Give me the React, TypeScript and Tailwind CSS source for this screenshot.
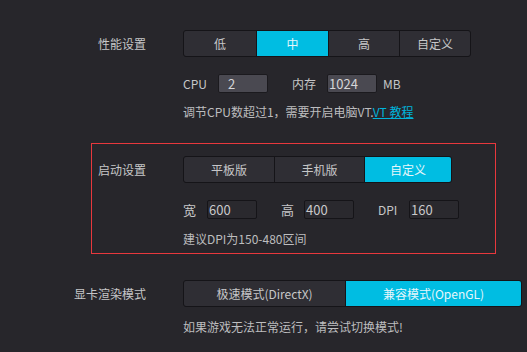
import React from 'react'

const font = { fontFamily: '"Noto Sans CJK SC", "Noto Sans", sans-serif' }

type SegProps = {
  items: { label: string; width: string }[]
  active: number
}

function Segmented({ items, active }: SegProps) {
  return (
    <div className="flex h-[27px] self-start overflow-hidden rounded-[3px] border border-[#151418] bg-[#151418]">
      {items.map((item, i) => (
        <div
          key={item.label}
          className={`flex items-center justify-center text-[12px] ${item.width} ${i > 0 ? 'border-l border-[#151418]' : ''} ${
            i === active ? 'bg-[#00bde2] text-[#e6f6fb]' : 'bg-[#2f2e34] text-[#c6c6c8]'
          }`}
        >
          {item.label}
        </div>
      ))}
    </div>
  )
}

function Field({ value, light, pad }: { value: string; light?: boolean; pad: string }) {
  return (
    <div
      className={`flex h-[19px] w-[50px] items-center rounded-[2px] border text-[13px] ${pad} ${
        light ? 'border-[#1b1a1e] bg-[#4a4951] text-[#d6d6d8]' : 'border-[#151418] bg-[#2a292e] text-[#c8c8ca]'
      }`}
    >
      {value}
    </div>
  )
}

export default function App() {
  return (
    <div style={font} className="h-[352px] w-[527px] overflow-hidden bg-[#27262b] pt-[30px] text-[12px] text-[#c6c6c8]">
      {/* 性能设置 */}
      <div className="flex">
        <div className="flex h-[27px] w-[146px] items-center justify-end">性能设置</div>
        <div className="ml-[37px] flex flex-col">
          <Segmented
            active={1}
            items={[
              { label: '低', width: 'w-[72px]' },
              { label: '中', width: 'w-[72px]' },
              { label: '高', width: 'w-[71px]' },
              { label: '自定义', width: 'w-[71px]' },
            ]}
          />
          <div className="mt-[17px] flex items-center">
            <span className="w-[35px]">CPU</span>
            <Field value="2" light pad="pl-[9px]" />
            <span className="ml-[24px] w-[35px]">内存</span>
            <Field value="1024" light pad="pl-[1px]" />
            <span className="ml-[6px]">MB</span>
          </div>
          <div className="mt-[11px] leading-[16px] text-[#bdbdbf]">
            调节CPU数超过1，需要开启电脑VT.<span className="text-[#00b4dc] underline">VT 教程</span>
          </div>
        </div>
      </div>

      {/* 启动设置 */}
      <div className="ml-[91px] mt-[23px] h-[111px] w-[405px] border border-[#e8383d] pl-[6px] pt-[12px]">
        <div className="flex">
          <div className="flex h-[27px] w-[85px] items-center">启动设置</div>
          <div className="flex flex-col">
            <Segmented
              active={2}
              items={[
                { label: '平板版', width: 'w-[90px]' },
                { label: '手机版', width: 'w-[90px]' },
                { label: '自定义', width: 'w-[87px]' },
              ]}
            />
            <div className="mt-[17px] flex items-center">
              <span className="w-[24px] text-[13px]">宽</span>
              <Field value="600" pad="pl-[1px]" />
              <span className="ml-[24px] w-[23px] text-[13px]">高</span>
              <Field value="400" pad="pl-[1px]" />
              <span className="ml-[24px] w-[31px]">DPI</span>
              <Field value="160" pad="pl-[1px]" />
            </div>
            <div className="mt-[11px] leading-[16px] text-[#bdbdbf]">建议DPI为150-480区间</div>
          </div>
        </div>
      </div>

      {/* 显卡渲染模式 */}
      <div className="mt-[26px] flex">
        <div className="flex h-[27px] w-[146px] items-center justify-end">显卡渲染模式</div>
        <div className="ml-[37px] flex flex-col">
          <Segmented
            active={1}
            items={[
              { label: '极速模式(DirectX)', width: 'w-[161px]' },
              { label: '兼容模式(OpenGL)', width: 'w-[176px]' },
            ]}
          />
          <div className="mt-[12px] leading-[16px] text-[#bdbdbf]">如果游戏无法正常运行，请尝试切换模式!</div>
        </div>
      </div>
    </div>
  )
}
